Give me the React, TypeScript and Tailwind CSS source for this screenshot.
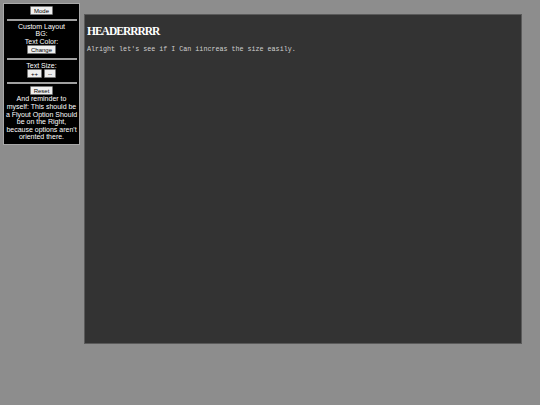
import React from "react";

function Btn({ children }: { children: React.ReactNode }) {
  return (
    <button className="bg-[#efefef] text-black border border-[#767676] rounded-[1px] px-[3px] h-[9px] text-[6px] leading-none">
      {children}
    </button>
  );
}

function Rule({ className = "" }: { className?: string }) {
  return <div className={"w-[70px] h-[2px] bg-[#a0a0a0] mx-auto " + className} />;
}

export default function App() {
  return (
    <div className="w-[540px] h-[405px] bg-[#8d8d8d] flex items-start gap-[4px] p-[3px] overflow-hidden">
      <div
        className="w-[77px] shrink-0 bg-black border border-[#a8a8a8] text-white text-center text-[7px] leading-[7.6px] pt-[2px] pb-[3px] px-[1.5px] flex flex-col items-center"
        style={{ fontFamily: '"Liberation Sans", Arial, sans-serif' }}
      >
        <Btn>Mode</Btn>
        <Rule className="mt-[4px]" />
        <div className="mt-[1.5px]">Custom Layout</div>
        <div>BG:</div>
        <div>Text Color:</div>
        <Btn>Change</Btn>
        <Rule className="mt-[4px]" />
        <div className="mt-[1.5px]">Text Size:</div>
        <div className="flex gap-[2px]">
          <Btn>++</Btn>
          <Btn>--</Btn>
        </div>
        <Rule className="mt-[4px]" />
        <div className="mt-[2px]">
          <Btn>Reset</Btn>
        </div>
        <div>
          And reminder to myself: This should be a Flyout Option Should be on the Right, because options aren't oriented there.
        </div>
      </div>
      <div className="mt-[11px] w-[438px] h-[330px] bg-[#333333] border border-[#5a5a5a] px-[2px] pt-[10px]">
        <div
          className="text-white font-bold text-[11.5px] leading-[12px] tracking-[-1px]"
          style={{ fontFamily: '"Liberation Serif", "Times New Roman", serif' }}
        >
          HEADERRRRR
        </div>
        <div
          className="text-[#cfcfcf] text-[6.7px] leading-[8px] mt-[8px]"
          style={{ fontFamily: '"Liberation Mono", "Courier New", monospace' }}
        >
          Alright let's see if I Can iincreas the size easily.
        </div>
      </div>
    </div>
  );
}
